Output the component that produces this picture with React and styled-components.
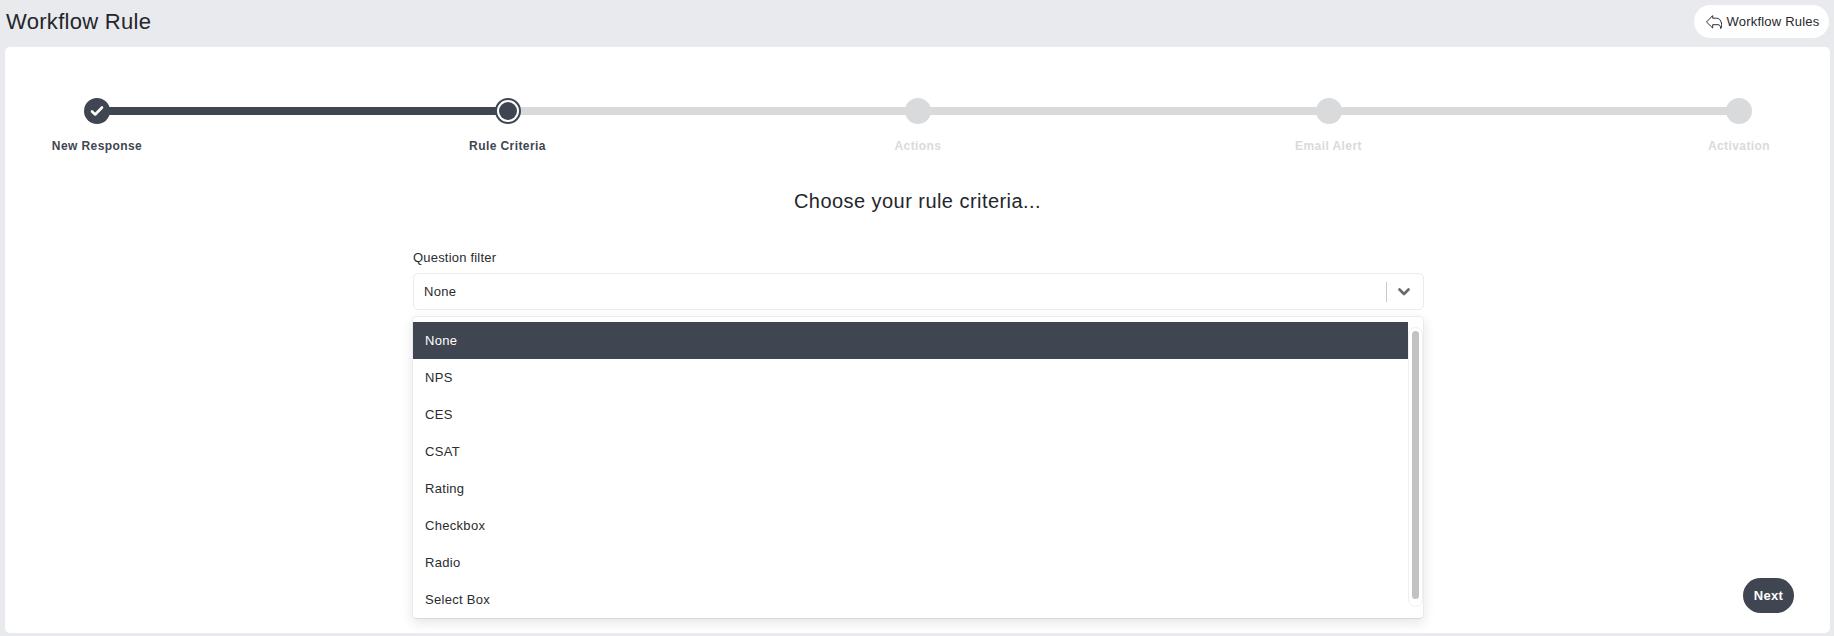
import React from 'react';
import styled, { createGlobalStyle } from 'styled-components';

const GlobalStyle = createGlobalStyle`
  html, body {
    margin: 0;
    padding: 0;
    height: 100%;
    background: #e9eaee;
    font-family: "Liberation Sans", Arial, sans-serif;
    color: #21252b;
  }
  * { box-sizing: border-box; }
`;

const Page = styled.div`
  width: 1834px;
  height: 636px;
  overflow: hidden;
  display: flex;
  flex-direction: column;
  padding: 0 4px 3px 5px;
`;

const Header = styled.header`
  height: 47px;
  flex: none;
  display: flex;
  align-items: flex-start;
  justify-content: space-between;
`;

const Title = styled.h1`
  margin: 8px 0 0 1px;
  font-size: 22px;
  line-height: 27px;
  font-weight: 400;
  letter-spacing: 0.3px;
  color: #23262b;
`;

const BackButton = styled.button`
  margin: 5px 1px 0 0;
  height: 33px;
  width: 135px;
  border: none;
  border-radius: 17px;
  background: #fff;
  display: flex;
  align-items: center;
  justify-content: center;
  gap: 5px;
  padding: 0 0 0 2px;
  font: 400 13px "Liberation Sans", Arial, sans-serif;
  letter-spacing: 0.2px;
  color: #26282c;
`;

const Card = styled.main`
  flex: 1;
  background: #fff;
  border-radius: 5px;
  display: flex;
  flex-direction: column;
`;

const Stepper = styled.ol`
  list-style: none;
  margin: 0;
  padding: 51px 77px 0 80px;
  display: flex;
`;

const Step = styled.li`
  flex: ${p => (p.$last ? '0 0 26px' : '1 1 0')};
  min-width: 0;
  display: flex;
  flex-direction: column;
`;

const Track = styled.div`
  display: flex;
  align-items: center;
  height: 26px;
`;

const Dot = styled.span`
  flex: none;
  width: 26px;
  height: 26px;
  border-radius: 50%;
  display: flex;
  align-items: center;
  justify-content: center;
  background: ${p => (p.$state === 'todo' ? '#d9dadc' : p.$state === 'current' ? '#fff' : '#3f4651')};
  border: ${p => (p.$state === 'current' ? '2px solid #3f4651' : 'none')};
  margin: 0 -1px;
  position: relative;
  z-index: 1;
`;

const DotCore = styled.span`
  width: 18px;
  height: 18px;
  border-radius: 50%;
  background: #3f4651;
`;

const Line = styled.span`
  flex: 1;
  height: 8px;
  background: ${p => (p.$done ? '#3f4651' : '#d9dadc')};
`;

const StepLabel = styled.span`
  margin: 14px 0 0 12px;
  width: max-content;
  transform: translateX(-50%);
  font-size: 12px;
  line-height: 16px;
  font-weight: 700;
  letter-spacing: 0.42px;
  color: ${p => (p.$muted ? '#d9dadc' : '#3f4651')};
`;

const Heading = styled.h2`
  margin: 34px 0 0;
  text-align: center;
  font-size: 20px;
  line-height: 26px;
  font-weight: 400;
  letter-spacing: 0.45px;
  color: #23262b;
`;

const Form = styled.div`
  width: 1011px;
  margin: 35px 0 0 408px;
  position: relative;
`;

const FieldLabel = styled.label`
  display: block;
  font-size: 13px;
  line-height: 18px;
  letter-spacing: 0.2px;
  color: #2a2c30;
`;

const SelectBox = styled.div`
  margin-top: 6px;
  height: 37px;
  border: 1px solid #ebebed;
  border-radius: 5px;
  display: flex;
  align-items: center;
  padding-left: 10px;
  font-size: 13px;
  letter-spacing: 0.3px;
  color: #2a2c30;
`;

const SelectValue = styled.span`
  flex: 1;
`;

const Separator = styled.span`
  width: 1px;
  height: 20px;
  background: #c9c9cb;
`;

const Caret = styled.span`
  width: 36px;
  padding-right: 2px;
  display: flex;
  justify-content: center;
  color: #66686c;
`;

const Menu = styled.ul`
  position: absolute;
  top: 67px;
  left: -1px;
  width: 1012px;
  height: 303px;
  margin: 0;
  padding: 5px 0 0;
  list-style: none;
  background: #fff;
  border: 1px solid #ebebed;
  border-bottom-color: #d9d9db;
  border-radius: 5px;
  box-shadow: 0 4px 12px rgba(40, 45, 55, 0.12);
  overflow: hidden;
  z-index: 5;
`;

const MenuItem = styled.li`
  width: 995px;
  height: 37px;
  display: flex;
  align-items: center;
  padding-left: 12px;
  font-size: 13px;
  letter-spacing: 0.3px;
  background: ${p => (p.$active ? '#3f4651' : 'transparent')};
  color: ${p => (p.$active ? '#fff' : '#2a2c30')};
`;

const Scrollbar = styled.div`
  position: absolute;
  top: 10px;
  right: 0;
  width: 15px;
  height: 280px;
  border: 1px solid #efefef;
  border-radius: 8px;
  padding: 3px 3px 7px;
`;

const ScrollThumb = styled.div`
  width: 7px;
  height: 100%;
  margin: 0 auto;
  border-radius: 4px;
  background: #c2c2c2;
`;

const Footer = styled.div`
  margin-top: auto;
  padding: 0 36px 20px 0;
  display: flex;
  justify-content: flex-end;
`;

const NextButton = styled.button`
  width: 51px;
  height: 35px;
  border: none;
  border-radius: 18px;
  background: #3f4651;
  color: #fff;
  font: 700 13px "Liberation Sans", Arial, sans-serif;
  letter-spacing: 0.3px;
  padding: 0;
`;

const BackIcon = () => (
  <svg width="16" height="14" viewBox="0 0 16 14" fill="none" stroke="#2b2d31" strokeWidth="1" strokeLinejoin="round">
    <path d="M6.7 0.6 L0.5 7 L6.7 13 V9.7 H12 C13.6 9.7 14.6 11 14.8 13.6 C15.6 12 15.8 10 15.4 8 C14.8 5 13 3.2 10.5 3.2 H6.7 Z" />
  </svg>
);

const CheckIcon = () => (
  <svg width="14" height="12" viewBox="0 0 14 12" fill="none" stroke="#fff" strokeWidth="2.6" strokeLinecap="round" strokeLinejoin="round">
    <path d="M2 6.5 L5.2 9.5 L12 2.5" />
  </svg>
);

const ChevronIcon = () => (
  <svg width="12" height="8" viewBox="0 0 12 8" fill="none" stroke="currentColor" strokeWidth="2.6" strokeLinecap="round" strokeLinejoin="round">
    <path d="M1.5 1.5 L6 6 L10.5 1.5" />
  </svg>
);

const steps = [
  { label: 'New Response', state: 'done' },
  { label: 'Rule Criteria', state: 'current' },
  { label: 'Actions', state: 'todo' },
  { label: 'Email Alert', state: 'todo' },
  { label: 'Activation', state: 'todo' },
];

const options = ['None', 'NPS', 'CES', 'CSAT', 'Rating', 'Checkbox', 'Radio', 'Select Box'];

const App = () => (
  <Page>
    <GlobalStyle />
    <Header>
      <Title>Workflow Rule</Title>
      <BackButton>
        <BackIcon />
        Workflow Rules
      </BackButton>
    </Header>
    <Card>
      <Stepper>
        {steps.map((step, i) => {
          const last = i === steps.length - 1;
          return (
            <Step key={step.label} $last={last}>
              <Track>
                <Dot $state={step.state}>
                  {step.state === 'done' && <CheckIcon />}
                  {step.state === 'current' && <DotCore />}
                </Dot>
                {!last && <Line $done={step.state === 'done'} />}
              </Track>
              <StepLabel $muted={step.state === 'todo'}>{step.label}</StepLabel>
            </Step>
          );
        })}
      </Stepper>
      <Heading>Choose your rule criteria...</Heading>
      <Form>
        <FieldLabel>Question filter</FieldLabel>
        <SelectBox>
          <SelectValue>None</SelectValue>
          <Separator />
          <Caret><ChevronIcon /></Caret>
        </SelectBox>
        <Menu>
          {options.map((option, i) => (
            <MenuItem key={option} $active={i === 0}>{option}</MenuItem>
          ))}
          <Scrollbar><ScrollThumb /></Scrollbar>
        </Menu>
      </Form>
      <Footer>
        <NextButton>Next</NextButton>
      </Footer>
    </Card>
  </Page>
);

export default App;
